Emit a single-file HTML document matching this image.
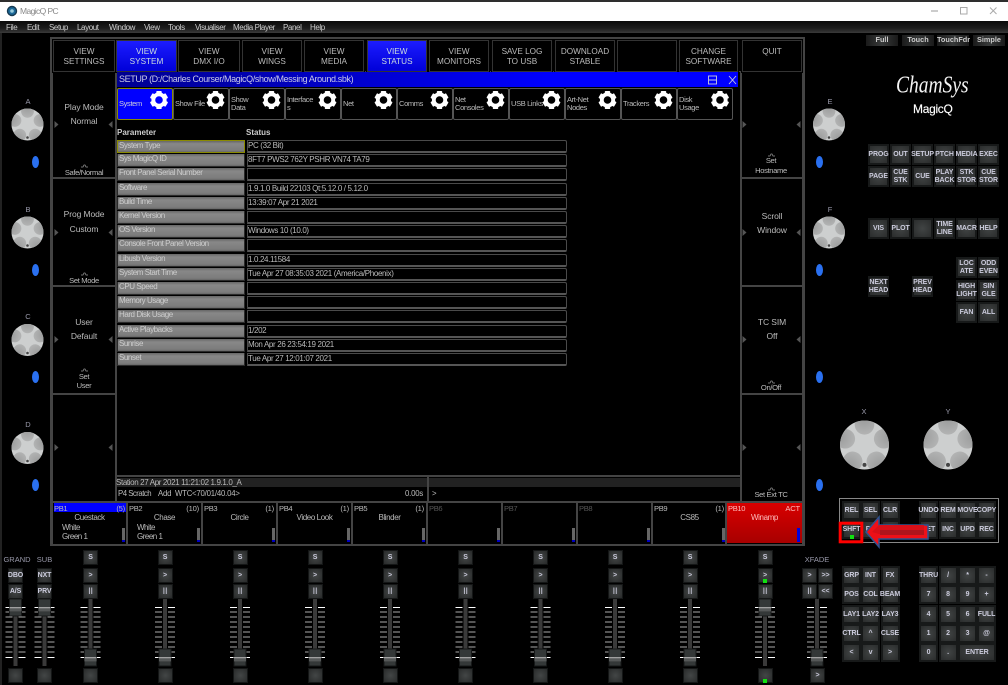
<!DOCTYPE html>
<html><head><meta charset="utf-8"><style>
html,body{margin:0;padding:0;background:#000;width:1008px;height:685px;overflow:hidden}
#r{position:relative;width:1008px;height:685px;overflow:hidden;background:#000;font:8px "Liberation Sans",sans-serif;color:#bbb;filter:blur(.35px)}
#r div{position:absolute;box-sizing:border-box;white-space:nowrap}
.g{background:#444}
.v{width:62px;height:32px;text-align:center;font-size:8.2px;line-height:9.5px;padding-top:6px;color:#bbb;border:1px solid #333;outline:1px solid #000}
.on{background:linear-gradient(#1c1cff,#0000d8);color:#cdd}
.c{width:100px;text-align:center;font-size:8.5px;letter-spacing:-.1px;line-height:10px}
.s{font-size:7.6px;letter-spacing:-.35px;color:#bbb}
.mn{top:23px;font-size:8px;letter-spacing:-.4px;line-height:10px;color:#ccc}
.tb{top:88px;width:56px;height:32px;border:1px solid #555;border-radius:2px;font-size:7.5px;letter-spacing:-.35px;line-height:8.5px;display:flex;align-items:center;padding-left:1px;color:#bbb}
.p{left:117px;width:128px;height:13px;background:linear-gradient(#666,#888 25%,#7c7c7c 85%,#666);color:#ccc;font-size:8px;letter-spacing:-.45px;line-height:9px;padding-left:1px;border:1px solid #2a2a2a;border-top:0}
.st{left:247px;width:320px;height:13px;border:1px solid #4a4a4a;border-bottom:2px solid #555;border-radius:0 2px 2px 0;color:#bbb;font-size:8px;letter-spacing:-.35px;line-height:9px}
.b{width:21px;height:21px;background:radial-gradient(#414444,#2a2c2c);border:2px solid #171919;text-align:center;color:#ccd;font-weight:bold;font-size:7px;line-height:7.5px;display:flex;align-items:center;justify-content:center;letter-spacing:-.1px;white-space:normal!important}
.k{width:19px;height:19px;font-size:7px}
.f{width:15px;height:15px;font-size:7px;background:radial-gradient(#434646,#282a2a);border:1px solid #141616}
.ii{font-size:9px;font-weight:normal}
.m{top:35px;height:11px;width:32px;background:linear-gradient(90deg,#1a1a1a,#383a3a,#1a1a1a);font-weight:bold;font-size:7.3px;line-height:10px;text-align:center;color:#ccc}
.pb{top:503px;width:73px;height:40px}
.h{left:1px;top:1px;font-size:7.6px;letter-spacing:-.35px;line-height:9px}
.n{top:1px;right:2px;font-size:7.6px;letter-spacing:-.2px;line-height:9px}
.nm{left:0;right:0;top:10px;text-align:center;font-size:8px;letter-spacing:-.4px;line-height:9px}
.bar{top:25px;left:69px;width:3px;height:14px;background:linear-gradient(#666 85%,#0000c0 85%)}
.l{font-size:8px;letter-spacing:-.5px;line-height:9px;left:9px}
.lb{font-size:7.5px;color:#99a;line-height:9px;text-align:center;width:40px}
.o{width:7px;height:12px;border-radius:50%;background:#2a70f0}
.sl{top:489px;font-size:7.8px;letter-spacing:-.2px;line-height:10px}
</style></head><body><div id="r">

<div style="left:0;top:0;width:1008px;height:2px;background:#2e2e2e"></div>
<div style="left:0;top:2px;width:1008px;height:19px;background:#fff"></div>
<div style="left:20px;top:6px;font-size:8.5px;letter-spacing:-.6px;line-height:11px;color:#888">MagicQ PC</div>
<svg style="position:absolute;left:0;top:0" width="1008" height="22"><circle cx="12" cy="11" r="4.5" fill="#1c6a9a" stroke="#163a52" stroke-width="1.4"/><circle cx="12" cy="11" r="1.8" fill="#9cd"/>
<path d="M931 11h7" stroke="#999"/><rect x="960.5" y="7.5" width="6.5" height="6.5" fill="none" stroke="#aaa"/><path d="M990 7.5l6.5 6.5M996.5 7.5l-6.5 6.5" stroke="#aaa"/></svg>
<div style="left:0;top:21px;width:1008px;height:12px;background:linear-gradient(#0a0a0a,#1c1c1c 60%,#3a3a3a)"></div>
<div class="mn" style="left:6px">File</div>
<div class="mn" style="left:27px">Edit</div>
<div class="mn" style="left:49px">Setup</div>
<div class="mn" style="left:77px">Layout</div>
<div class="mn" style="left:109px">Window</div>
<div class="mn" style="left:144px">View</div>
<div class="mn" style="left:168px">Tools</div>
<div class="mn" style="left:195px">Visualiser</div>
<div class="mn" style="left:233px">Media Player</div>
<div class="mn" style="left:283px">Panel</div>
<div class="mn" style="left:310px">Help</div>
<div style="left:0;top:33px;width:2px;height:652px;background:#222"></div>

<!-- frame -->
<div class="g" style="left:50px;top:37px;width:755px;height:2px"></div>
<div class="g" style="left:50px;top:37px;width:3px;height:509px"></div>
<div class="g" style="left:802px;top:37px;width:3px;height:509px"></div>
<div class="g" style="left:50px;top:544px;width:755px;height:2px"></div>
<div class="g" style="left:53px;top:71px;width:750px;height:1px"></div>
<div class="g" style="left:115px;top:72px;width:2px;height:430px"></div>
<div class="g" style="left:740px;top:72px;width:2px;height:430px"></div>
<div class="g" style="left:53px;top:177px;width:62px;height:2px"></div>
<div class="g" style="left:53px;top:285px;width:62px;height:2px"></div>
<div class="g" style="left:53px;top:393px;width:62px;height:2px"></div>
<div class="g" style="left:742px;top:177px;width:61px;height:2px"></div>
<div class="g" style="left:742px;top:285px;width:61px;height:2px"></div>
<div class="g" style="left:742px;top:393px;width:61px;height:2px"></div>
<div class="g" style="left:53px;top:501px;width:750px;height:2px"></div>

<!-- top buttons -->
<div class="v" style="left:53px;top:40px">VIEW<br>SETTINGS</div>
<div class="v on" style="left:116px;top:40px;width:61px">VIEW<br>SYSTEM</div>
<div class="v" style="left:178px;top:40px">VIEW<br>DMX I/O</div>
<div class="v" style="left:242px;top:40px;width:60px">VIEW<br>WINGS</div>
<div class="v" style="left:304px;top:40px;width:60px">VIEW<br>MEDIA</div>
<div class="v on" style="left:367px;top:40px;width:60px">VIEW<br>STATUS</div>
<div class="v" style="left:429px;top:40px;width:60px">VIEW<br>MONITORS</div>
<div class="v" style="left:492px;top:40px;width:60px">SAVE LOG<br>TO USB</div>
<div class="v" style="left:555px;top:40px;width:60px">DOWNLOAD<br>STABLE</div>
<div class="v" style="left:617px;top:40px;width:60px"></div>
<div class="v" style="left:679px;top:40px;width:59px">CHANGE<br>SOFTWARE</div>
<div class="v" style="left:742px;top:40px;width:60px">QUIT</div>

<!-- side labels -->
<div class="c" style="left:34px;top:102px">Play Mode</div>
<div class="c" style="left:34px;top:116px">Normal</div>
<div class="c s" style="left:34px;top:168px">Safe/Normal</div>
<div class="c" style="left:34px;top:209px">Prog Mode</div>
<div class="c" style="left:34px;top:224px">Custom</div>
<div class="c s" style="left:34px;top:276px">Set Mode</div>
<div class="c" style="left:34px;top:317px">User</div>
<div class="c" style="left:34px;top:331px">Default</div>
<div class="c s" style="left:34px;top:372px">Set</div>
<div class="c s" style="left:34px;top:381px">User</div>
<div class="c s" style="left:721px;top:156px">Set</div>
<div class="c s" style="left:721px;top:166px">Hostname</div>
<div class="c" style="left:722px;top:211px">Scroll</div>
<div class="c" style="left:722px;top:225px">Window</div>
<div class="c" style="left:722px;top:317px">TC SIM</div>
<div class="c" style="left:722px;top:331px">Off</div>
<div class="c s" style="left:721px;top:383px">On/Off</div>
<div class="c s" style="left:721px;top:490px">Set Ext TC</div>

<!-- window -->
<div style="left:117px;top:72px;width:621px;height:15px;background:linear-gradient(90deg,#000090,#0000ff 70%)"></div>
<div style="left:119px;top:74px;font-size:9px;letter-spacing:-.38px;line-height:10px;color:#c8c8e8">SETUP (D:/Charles Courser/MagicQ/show/Messing Around.sbk)</div>

<div class="tb" style="left:117px;background:#0000ff;border:1px solid #8a8a00;color:#ccd">System</div>
<div class="tb" style="left:173px">Show File</div>
<div class="tb" style="left:229px">Show<br>Data</div>
<div class="tb" style="left:285px">Interface<br>s</div>
<div class="tb" style="left:341px">Net</div>
<div class="tb" style="left:397px">Comms</div>
<div class="tb" style="left:453px">Net<br>Consoles</div>
<div class="tb" style="left:509px">USB Links</div>
<div class="tb" style="left:565px">Art-Net<br>Nodes</div>
<div class="tb" style="left:621px">Trackers</div>
<div class="tb" style="left:677px">Disk<br>Usage</div>

<div style="left:117px;top:128px;font-weight:bold;font-size:8px;line-height:10px;color:#ccc">Parameter</div>
<div style="left:246px;top:128px;font-weight:bold;font-size:8px;line-height:10px;color:#ccc">Status</div>

<div class="p" style="top:140px;border:1px solid #8a8a00">System Type</div><div class="st" style="top:140px">PC (32 Bit)</div>
<div class="p" style="top:154px">Sys MagicQ ID</div><div class="st" style="top:154px">8FT7 PWS2 762Y PSHR VN74 TA79</div>
<div class="p" style="top:168px">Front Panel Serial Number</div><div class="st" style="top:168px"></div>
<div class="p" style="top:182.5px">Software</div><div class="st" style="top:182.5px">1.9.1.0 Build 22103 Qt:5.12.0 / 5.12.0</div>
<div class="p" style="top:197px">Build Time</div><div class="st" style="top:197px">13:39:07 Apr 21 2021</div>
<div class="p" style="top:211px">Kernel Version</div><div class="st" style="top:211px"></div>
<div class="p" style="top:225px">OS Version</div><div class="st" style="top:225px">Windows 10 (10.0)</div>
<div class="p" style="top:239px">Console Front Panel Version</div><div class="st" style="top:239px"></div>
<div class="p" style="top:253.5px">Libusb Version</div><div class="st" style="top:253.5px">1.0.24.11584</div>
<div class="p" style="top:267.5px">System Start Time</div><div class="st" style="top:267.5px">Tue Apr 27 08:35:03 2021 (America/Phoenix)</div>
<div class="p" style="top:282px">CPU Speed</div><div class="st" style="top:282px"></div>
<div class="p" style="top:296px">Memory Usage</div><div class="st" style="top:296px"></div>
<div class="p" style="top:310px">Hard Disk Usage</div><div class="st" style="top:310px"></div>
<div class="p" style="top:324.5px">Active Playbacks</div><div class="st" style="top:324.5px">1/202</div>
<div class="p" style="top:338.5px">Sunrise</div><div class="st" style="top:338.5px">Mon Apr 26 23:54:19 2021</div>
<div class="p" style="top:352.5px">Sunset</div><div class="st" style="top:352.5px">Tue Apr 27 12:01:07 2021</div>

<!-- status -->
<div class="g" style="left:117px;top:475px;width:623px;height:2px"></div>
<div class="g" style="left:427px;top:475px;width:2px;height:27px"></div>
<div style="left:117px;top:478px;width:310px;height:9px;background:#222"></div>
<div style="left:429px;top:478px;width:311px;height:9px;background:#222"></div>
<div style="left:116px;top:478px;font-size:8px;letter-spacing:-.37px;line-height:10px">Station 27 Apr 2021 11:21:02 1.9.1.0_A</div>
<div class="sl" style="left:118px;letter-spacing:-.5px">P4 Scratch</div>
<div class="sl" style="left:158px">Add</div>
<div class="sl" style="left:175px">WTC</div>
<div class="sl" style="left:192px">&lt;70/01/40.04&gt;</div>
<div class="sl" style="left:405px">0.00s</div>
<div class="sl" style="left:432px">&gt;</div>

<!-- playbacks -->
<div class="pb" style="left:53px"><div style="left:1px;top:0;width:72px;height:9px;background:#0000ff"></div><div class="h">PB1</div><div class="n" style="right:1px">(5)</div><div class="nm">Cuestack</div><div class="l" style="top:20px">White</div><div class="l" style="top:29px">Green 1</div><div class="bar"></div></div>
<div class="pb" style="left:128px"><div class="h">PB2</div><div class="n">(10)</div><div class="nm">Chase</div><div class="l" style="top:20px">White</div><div class="l" style="top:29px">Green 1</div><div class="bar"></div></div>
<div class="pb" style="left:203px"><div class="h">PB3</div><div class="n">(1)</div><div class="nm">Circle</div><div class="bar"></div></div>
<div class="pb" style="left:278px"><div class="h">PB4</div><div class="n">(1)</div><div class="nm">Video Look</div><div class="bar"></div></div>
<div class="pb" style="left:353px"><div class="h">PB5</div><div class="n">(1)</div><div class="nm">Blinder</div><div class="bar"></div></div>
<div class="pb" style="left:428px"><div class="h" style="color:#555">PB6</div><div class="bar"></div></div>
<div class="pb" style="left:503px"><div class="h" style="color:#555">PB7</div><div class="bar"></div></div>
<div class="pb" style="left:578px"><div class="h" style="color:#555">PB8</div><div class="bar"></div></div>
<div class="pb" style="left:653px"><div class="h">PB9</div><div class="n">(1)</div><div class="nm">CS85</div><div class="bar"></div></div>
<div class="pb" style="left:727px;width:75px;background:linear-gradient(#d80000,#a80000);color:#fbb"><div class="h">PB10</div><div class="n">ACT</div><div class="nm">Winamp</div><div style="left:70px;top:25px;width:3px;height:14px;background:#0000e0"></div></div>
<div class="g" style="left:126px;top:502px;width:2px;height:42px"></div>
<div class="g" style="left:201px;top:502px;width:2px;height:42px"></div>
<div class="g" style="left:276px;top:502px;width:2px;height:42px"></div>
<div class="g" style="left:351px;top:502px;width:2px;height:42px"></div>
<div class="g" style="left:426px;top:502px;width:2px;height:42px"></div>
<div class="g" style="left:501px;top:502px;width:2px;height:42px"></div>
<div class="g" style="left:576px;top:502px;width:2px;height:42px"></div>
<div class="g" style="left:651px;top:502px;width:2px;height:42px"></div>
<div class="g" style="left:725px;top:502px;width:2px;height:42px"></div>

<!-- graphics -->
<svg style="position:absolute;left:0;top:0" width="1008" height="685">
<defs>
<g id="gear"><g fill="#fff"><rect x="-2.7" y="-9" width="5.4" height="4" rx=".8"/><rect x="-2.7" y="-9" width="5.4" height="4" rx=".8" transform="rotate(60)"/><rect x="-2.7" y="-9" width="5.4" height="4" rx=".8" transform="rotate(120)"/><rect x="-2.7" y="-9" width="5.4" height="4" rx=".8" transform="rotate(180)"/><rect x="-2.7" y="-9" width="5.4" height="4" rx=".8" transform="rotate(240)"/><rect x="-2.7" y="-9" width="5.4" height="4" rx=".8" transform="rotate(300)"/></g><circle r="5.7" fill="none" stroke="#fff" stroke-width="3.8"/></g>
<clipPath id="kc"><circle r="16"/></clipPath>
<radialGradient id="dp" cx=".5" cy=".15" r=".9"><stop offset="0" stop-color="#999a9a"/><stop offset="1" stop-color="#b4b5b5"/></radialGradient>
<g id="knob"><circle r="16" fill="#cdcfcf"/><g clip-path="url(#kc)" fill="url(#dp)"><circle cy="-13.2" r="6.4"/><circle cy="-13.2" r="6.4" transform="rotate(72)"/><circle cy="-13.2" r="6.4" transform="rotate(144)"/><circle cy="-13.2" r="6.4" transform="rotate(216)"/><circle cy="-13.2" r="6.4" transform="rotate(288)"/></g><circle cy="13" r="1.3" fill="#444"/></g>
<g id="fd"><rect x="-2" y="599" width="4" height="67" fill="#3a3a3a"/><g stroke="#aaa" stroke-width="1"><path d="M-10 612h7M3 612h7M-10 617h7M3 617h7M-10 622h7M3 622h7M-10 627h7M3 627h7M-10 632h7M3 632h7M-10 637h7M3 637h7M-10 642h7M3 642h7M-10 647h7M3 647h7M-10 652h7M3 652h7"/></g><path d="M-10 607.5h7M3 607.5h7M-10 657.5h7M3 657.5h7" stroke="#fff"/></g>
<g id="cap"><rect x="-6" y="0" width="12" height="17" fill="#343838" stroke="#161818"/><rect x="-6" y="8" width="12" height="1.4" fill="#a0a0a0"/><rect x="-6" y="9.4" width="12" height="3" fill="#555858"/></g>
<path id="tl" d="M0 0l4 3.5-4 3.5z" fill="#555"/><path id="tr" d="M4 0l-4 3.5 4 3.5z" fill="#555"/>
<path id="arch" d="M-3 2h2l1-2h1l1 2h2" fill="none" stroke="#999" stroke-width=".7"/>
</defs>
<use href="#gear" x="159" y="100"/><use href="#gear" x="215.5" y="100"/><use href="#gear" x="271.5" y="100"/><use href="#gear" x="327.5" y="100"/><use href="#gear" x="383.5" y="100"/><use href="#gear" x="439.5" y="100"/><use href="#gear" x="495.5" y="100"/><use href="#gear" x="551.5" y="100"/><use href="#gear" x="607.5" y="100"/><use href="#gear" x="663.5" y="100"/><use href="#gear" x="720" y="100"/>
<rect x="708.5" y="76" width="8" height="8" fill="none" stroke="#ccd" stroke-width=".9"/><path d="M708.5 80h8M729 76l7 8M736 76l-7 8" stroke="#ccd" stroke-width=".9"/>
<use href="#knob" x="27.5" y="124.5"/><use href="#knob" x="27.5" y="232.5"/><use href="#knob" x="27.5" y="340"/><use href="#knob" x="27.5" y="448"/>
<use href="#knob" x="829" y="124.5"/><use href="#knob" x="829" y="232.5"/>
<use href="#knob" transform="translate(864.5 445) scale(1.53)"/><use href="#knob" transform="translate(948 445) scale(1.53)"/>
<use href="#tl" x="54.5" y="121"/><use href="#tr" x="108.5" y="121"/><use href="#tl" x="54.5" y="229"/><use href="#tr" x="108.5" y="229"/><use href="#tl" x="54.5" y="336"/><use href="#tr" x="108.5" y="336"/><use href="#tl" x="54.5" y="444"/><use href="#tr" x="108.5" y="444"/>
<use href="#tl" x="742.5" y="121"/><use href="#tr" x="796.5" y="121"/><use href="#tl" x="742.5" y="229"/><use href="#tr" x="796.5" y="229"/><use href="#tl" x="742.5" y="336"/><use href="#tr" x="796.5" y="336"/><use href="#tl" x="742.5" y="444"/><use href="#tr" x="796.5" y="444"/>
<use href="#arch" x="84" y="165"/><use href="#arch" x="84" y="273"/><use href="#arch" x="84" y="369"/><use href="#arch" x="771" y="154"/><use href="#arch" x="771" y="381"/><use href="#arch" x="771" y="488"/>
<use href="#fd" x="15.5"/><use href="#fd" x="44.5"/><use href="#fd" x="90.5"/><use href="#fd" x="165"/><use href="#fd" x="240"/><use href="#fd" x="315"/><use href="#fd" x="390"/><use href="#fd" x="465.5"/><use href="#fd" x="540.5"/><use href="#fd" x="615"/><use href="#fd" x="690"/><use href="#fd" x="765"/><use href="#fd" x="817"/>
<use href="#cap" x="15.5" y="599"/><use href="#cap" x="44.5" y="599"/><use href="#cap" x="765" y="599"/>
<use href="#cap" x="90.5" y="649"/><use href="#cap" x="165" y="649"/><use href="#cap" x="240" y="649"/><use href="#cap" x="315" y="649"/><use href="#cap" x="390" y="649"/><use href="#cap" x="465.5" y="649"/><use href="#cap" x="540.5" y="649"/><use href="#cap" x="615" y="649"/><use href="#cap" x="690" y="649"/><use href="#cap" x="817" y="649"/>
</svg>
<div class="o" style="left:32px;top:156px"></div><div class="o" style="left:32px;top:264px"></div><div class="o" style="left:32px;top:371px"></div><div class="o" style="left:32px;top:479px"></div>
<div class="o" style="left:816px;top:156px"></div><div class="o" style="left:816px;top:264px"></div><div class="o" style="left:816px;top:371px"></div><div class="o" style="left:816px;top:479px"></div>
<div class="lb" style="left:8px;top:97px">A</div><div class="lb" style="left:8px;top:205px">B</div><div class="lb" style="left:8px;top:312px">C</div><div class="lb" style="left:8px;top:420px">D</div>
<div class="lb" style="left:810px;top:97px">E</div><div class="lb" style="left:810px;top:205px">F</div><div class="lb" style="left:844px;top:407px">X</div><div class="lb" style="left:928px;top:407px">Y</div>

<!-- mode buttons + logo -->
<div class="m" style="left:866px">Full</div><div class="m" style="left:902px">Touch</div><div class="m" style="left:937px">TouchFdr</div><div class="m" style="left:973px">Simple</div>
<div style="left:896px;top:74px;font:italic 19.5px/24px 'Liberation Serif',serif;color:#f4f4f4;transform:scaleY(1.25)">ChamSys</div>
<div style="left:913px;top:102px;font-size:12px;line-height:14px;color:#fff;letter-spacing:-.3px;-webkit-text-stroke:.15px #fff">MagicQ</div>

<div class="b" style="left:868px;top:144px">PROG</div><div class="b" style="left:890px;top:144px">OUT</div><div class="b" style="left:912px;top:144px">SETUP</div><div class="b" style="left:934px;top:144px">PTCH</div><div class="b" style="left:956px;top:144px">MEDIA</div><div class="b" style="left:978px;top:144px">EXEC</div>
<div class="b" style="left:868px;top:166px">PAGE</div><div class="b" style="left:890px;top:166px">CUE STK</div><div class="b" style="left:912px;top:166px">CUE</div><div class="b" style="left:934px;top:166px">PLAY BACK</div><div class="b" style="left:956px;top:166px">STK STOR</div><div class="b" style="left:978px;top:166px">CUE STOR</div>
<div class="b" style="left:868px;top:218px">VIS</div><div class="b" style="left:890px;top:218px">PLOT</div><div class="b" style="left:912px;top:218px"></div><div class="b" style="left:934px;top:218px">TIME LINE</div><div class="b" style="left:956px;top:218px">MACR</div><div class="b" style="left:978px;top:218px">HELP</div>
<div class="b" style="left:956px;top:257px">LOC ATE</div><div class="b" style="left:978px;top:257px">ODD EVEN</div>
<div class="b" style="left:956px;top:280px">HIGH LIGHT</div><div class="b" style="left:978px;top:280px">SIN GLE</div>
<div class="b" style="left:956px;top:302px">FAN</div><div class="b" style="left:978px;top:302px">ALL</div>
<div class="b" style="left:868px;top:276px">NEXT HEAD</div><div class="b" style="left:912px;top:276px">PREV HEAD</div>

<!-- keypad frame -->
<div style="left:839px;top:498px;width:160px;height:45px;border:1.5px solid #888"></div>
<div class="b k" style="left:842px;top:501px">REL</div><div class="b k" style="left:861px;top:501px">SEL</div><div class="b k" style="left:880.5px;top:501px">CLR</div>
<div class="b k" style="left:919px;top:501px">UNDO</div><div class="b k" style="left:938.5px;top:501px">REM</div><div class="b k" style="left:958px;top:501px">MOVE</div><div class="b k" style="left:977px;top:501px">COPY</div>
<div class="b k" style="left:842px;top:520px">SHFT</div><div class="b k" style="left:861px;top:520px">PB</div><div class="b k" style="left:880.5px;top:520px"></div><div class="b k" style="left:919px;top:520px">SET</div><div class="b k" style="left:938.5px;top:520px">INC</div><div class="b k" style="left:958px;top:520px">UPD</div><div class="b k" style="left:977px;top:520px">REC</div>

<div class="b k" style="left:842px;top:566px">GRP</div><div class="b k" style="left:861px;top:566px">INT</div><div class="b k" style="left:880.5px;top:566px">FX</div>
<div class="b k" style="left:842px;top:585px">POS</div><div class="b k" style="left:861px;top:585px">COL</div><div class="b k" style="left:880.5px;top:585px">BEAM</div>
<div class="b k" style="left:842px;top:605px">LAY1</div><div class="b k" style="left:861px;top:605px">LAY2</div><div class="b k" style="left:880.5px;top:605px">LAY3</div>
<div class="b k" style="left:842px;top:624px">CTRL</div><div class="b k" style="left:861px;top:624px">^</div><div class="b k" style="left:880.5px;top:624px">CLSE</div>
<div class="b k" style="left:842px;top:643px">&lt;</div><div class="b k" style="left:861px;top:643px">v</div><div class="b k" style="left:880.5px;top:643px">&gt;</div>

<div class="b k" style="left:919px;top:566px">THRU</div><div class="b k" style="left:938.5px;top:566px">/</div><div class="b k" style="left:958px;top:566px">*</div><div class="b k" style="left:977px;top:566px">-</div>
<div class="b k" style="left:919px;top:585px">7</div><div class="b k" style="left:938.5px;top:585px">8</div><div class="b k" style="left:958px;top:585px">9</div><div class="b k" style="left:977px;top:585px">+</div>
<div class="b k" style="left:919px;top:605px">4</div><div class="b k" style="left:938.5px;top:605px">5</div><div class="b k" style="left:958px;top:605px">6</div><div class="b k" style="left:977px;top:605px">FULL</div>
<div class="b k" style="left:919px;top:624px">1</div><div class="b k" style="left:938.5px;top:624px">2</div><div class="b k" style="left:958px;top:624px">3</div><div class="b k" style="left:977px;top:624px">@</div>
<div class="b k" style="left:919px;top:643px">0</div><div class="b k" style="left:938.5px;top:643px">.</div><div class="b k" style="left:958px;top:643px;width:38px">ENTER</div>

<!-- fader buttons -->
<div class="lb" style="left:-3px;top:555px">GRAND</div><div class="lb" style="left:24.5px;top:555px">SUB</div><div class="lb" style="left:797px;top:555px">XFADE</div>
<div class="b f" style="left:8px;top:568px">DBO</div><div class="b f" style="left:8px;top:584px">A/S</div><div class="b f" style="left:8px;top:668px"></div>
<div class="b f" style="left:37px;top:568px">NXT</div><div class="b f" style="left:37px;top:584px">PRV</div><div class="b f" style="left:37px;top:668px"></div>

<div class="b f" style="left:83px;top:550px">S</div><div class="b f" style="left:83px;top:568px">&gt;</div><div class="b f ii" style="left:83px;top:584px">II</div><div class="b f" style="left:83px;top:668px"></div>
<div class="b f" style="left:157.5px;top:550px">S</div><div class="b f" style="left:157.5px;top:568px">&gt;</div><div class="b f ii" style="left:157.5px;top:584px">II</div><div class="b f" style="left:157.5px;top:668px"></div>
<div class="b f" style="left:232.5px;top:550px">S</div><div class="b f" style="left:232.5px;top:568px">&gt;</div><div class="b f ii" style="left:232.5px;top:584px">II</div><div class="b f" style="left:232.5px;top:668px"></div>
<div class="b f" style="left:307.5px;top:550px">S</div><div class="b f" style="left:307.5px;top:568px">&gt;</div><div class="b f ii" style="left:307.5px;top:584px">II</div><div class="b f" style="left:307.5px;top:668px"></div>
<div class="b f" style="left:382.5px;top:550px">S</div><div class="b f" style="left:382.5px;top:568px">&gt;</div><div class="b f ii" style="left:382.5px;top:584px">II</div><div class="b f" style="left:382.5px;top:668px"></div>
<div class="b f" style="left:458px;top:550px">S</div><div class="b f" style="left:458px;top:568px">&gt;</div><div class="b f ii" style="left:458px;top:584px">II</div><div class="b f" style="left:458px;top:668px"></div>
<div class="b f" style="left:533px;top:550px">S</div><div class="b f" style="left:533px;top:568px">&gt;</div><div class="b f ii" style="left:533px;top:584px">II</div><div class="b f" style="left:533px;top:668px"></div>
<div class="b f" style="left:607.5px;top:550px">S</div><div class="b f" style="left:607.5px;top:568px">&gt;</div><div class="b f ii" style="left:607.5px;top:584px">II</div><div class="b f" style="left:607.5px;top:668px"></div>
<div class="b f" style="left:682.5px;top:550px">S</div><div class="b f" style="left:682.5px;top:568px">&gt;</div><div class="b f ii" style="left:682.5px;top:584px">II</div><div class="b f" style="left:682.5px;top:668px"></div>
<div class="b f" style="left:757.5px;top:550px">S</div><div class="b f" style="left:757.5px;top:568px">&gt;</div><div class="b f ii" style="left:757.5px;top:584px">II</div><div class="b f" style="left:757.5px;top:668px"></div>
<div class="b f" style="left:802px;top:568px">&gt;</div><div class="b f" style="left:818px;top:568px">&gt;&gt;</div><div class="b f ii" style="left:802px;top:584px">II</div><div class="b f" style="left:818px;top:584px">&lt;&lt;</div>
<div class="b f" style="left:810px;top:668px">&gt;</div>
<div style="left:763px;top:579px;width:4px;height:4px;background:#10e010"></div>
<div style="left:763px;top:679px;width:4px;height:4px;background:#10e010"></div>

<!-- annotation -->
<svg style="position:absolute;left:0;top:0" width="1008" height="685">
<path d="M866 532L879 517V525H928V539H879V547Z" fill="#ee1018" stroke="#2f528f" stroke-width="1.5"/>
<path d="M872 532L879 525H924V534H879Z" fill="#d80f18"/>
<path d="M880 530H924V535H880Z" fill="#b0141c"/>
<rect x="840.2" y="523.2" width="21.6" height="18.6" fill="none" stroke="#f00" stroke-width="3"/>
<rect x="850" y="535" width="4" height="4" fill="#10e010"/>
</svg>
</div></body></html>
